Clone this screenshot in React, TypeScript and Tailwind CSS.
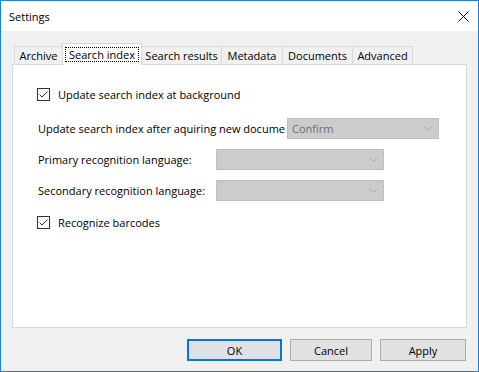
import React from "react";

function CheckBox() {
  return (
    <div className="w-[13px] h-[13px] border border-[#333333] bg-white flex items-center justify-center shrink-0">
      <svg width="11" height="11" viewBox="0 0 11 11">
        <polyline points="1.5,5.5 4,8 9.5,2.5" fill="none" stroke="#333333" strokeWidth="1" />
      </svg>
    </div>
  );
}

function Combo({ w, text }: { w: string; text?: string }) {
  return (
    <div className={`${w} h-[21px] bg-[#cccccc] border border-[#bfbfbf] flex items-center justify-between pl-[4px] pr-[5px] shrink-0`}>
      <span className="text-[#6d6d6d]">{text ?? ""}</span>
      <svg width="9" height="5" viewBox="0 0 9 5">
        <polyline points="0.5,0.5 4.5,4.5 8.5,0.5" fill="none" stroke="#a9a9a9" strokeWidth="1" />
      </svg>
    </div>
  );
}

export default function App() {
  const tabs = [
    { label: "Archive", w: "w-[48px]", sel: false, cls: "border-l border-t" },
    { label: "Search index", w: "w-[80px]", sel: true, cls: "" },
    { label: "Search results", w: "w-[80px]", sel: false, cls: "border-t border-r" },
    { label: "Metadata", w: "w-[61px]", sel: false, cls: "border-t border-r" },
    { label: "Documents", w: "w-[70px]", sel: false, cls: "border-t border-r" },
    { label: "Advanced", w: "w-[60px]", sel: false, cls: "border-t border-r" },
  ];
  return (
    <div className="w-[479px] h-[372px] border border-[#1883d7] bg-[#f0f0f0] flex flex-col font-['Open_Sans',sans-serif] text-[11px] text-black leading-none">
      <div className="h-[30px] bg-white flex items-center justify-between pl-[8px] pr-[9px] shrink-0">
        <span>Settings</span>
        <svg width="11" height="11" viewBox="0 0 11 11">
          <path d="M0.5 0.5 L10.5 10.5 M10.5 0.5 L0.5 10.5" stroke="#000" strokeWidth="1" />
        </svg>
      </div>
      <div className="flex-1 flex flex-col pt-[12px] pl-[11px] pr-[11px]">
        <div className="flex items-end h-[21px] pl-[2px] relative z-10">
          {tabs.map((t) =>
            t.sel ? (
              <div
                key={t.label}
                className={`${t.w} h-[22px] -mb-px bg-white border-l border-t border-r border-[#d9d9d9] flex items-start justify-center pt-[3px]`}
              >
                <div className="border border-dotted border-black px-[3px] h-[15px] flex items-center">
                  {t.label}
                </div>
              </div>
            ) : (
              <div
                key={t.label}
                className={`${t.w} h-[18px] bg-[#f0f0f0] ${t.cls} border-[#d9d9d9] flex items-center justify-center`}
              >
                {t.label}
              </div>
            )
          )}
        </div>
        <div className="w-[455px] h-[264px] bg-white border border-[#d9d9d9] flex flex-col pl-[24px] pt-[23px]">
          <div className="flex items-center h-[13px] gap-[8px]">
            <CheckBox />
            <span>Update search index at background</span>
          </div>
          <div className="flex items-center mt-[17px]">
            <div className="w-[250px] whitespace-nowrap pl-[1px]">
              Update search index after aquiring new docume
            </div>
            <Combo w="w-[152px]" text="Confirm" />
          </div>
          <div className="flex items-center mt-[10px]">
            <div className="w-[179px] whitespace-nowrap pl-[1px]">Primary recognition language:</div>
            <Combo w="w-[168px]" />
          </div>
          <div className="flex items-center mt-[10px]">
            <div className="w-[179px] whitespace-nowrap pl-[1px]">Secondary recognition language:</div>
            <Combo w="w-[168px]" />
          </div>
          <div className="flex items-center h-[13px] gap-[8px] mt-[15px]">
            <CheckBox />
            <span>Recognize barcodes</span>
          </div>
        </div>
        <div className="flex justify-end gap-[8px] mt-[11px] pr-[1px]">
          <button className="w-[95px] h-[22px] bg-[#e1e1e1] border-2 border-[#0078d7] flex items-center justify-center">OK</button>
          <button className="w-[82px] h-[22px] bg-[#e1e1e1] border border-[#adadad] flex items-center justify-center">Cancel</button>
          <button className="w-[86px] h-[22px] bg-[#e1e1e1] border border-[#adadad] flex items-center justify-center">Apply</button>
        </div>
      </div>
    </div>
  );
}
